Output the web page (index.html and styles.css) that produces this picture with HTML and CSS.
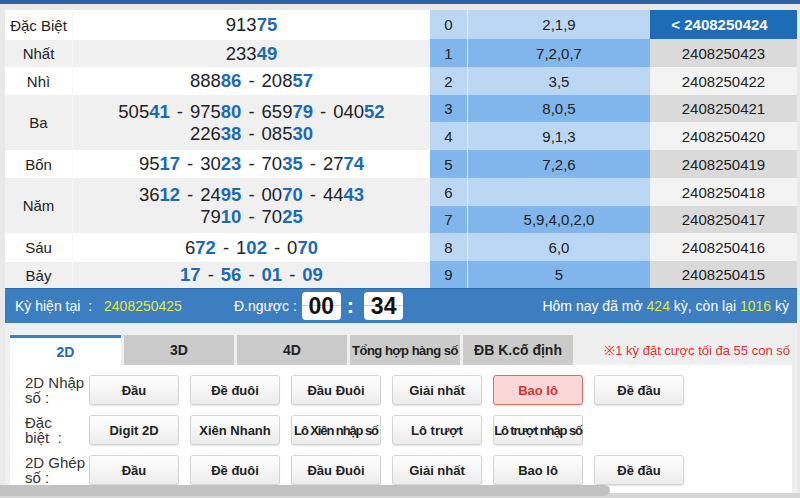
FILE: index.html
```html
<!DOCTYPE html>
<html lang="vi">
<head>
<meta charset="utf-8">
<link rel="stylesheet" href="styles.css">
</head>
<body>
<div class="top-strip"></div>
<div class="page">
  <div class="results">
    <div class="prizes">
      <div class="prow white h30"><div class="plabel">Đặc Biệt</div><div class="pnums"><span>913<b>75</b></span></div></div>
      <div class="prow gray h27"><div class="plabel">Nhất</div><div class="pnums"><span>233<b>49</b></span></div></div>
      <div class="prow white h28"><div class="plabel">Nhì</div><div class="pnums"><span>888<b>86</b><i>-</i>208<b>57</b></span></div></div>
      <div class="prow gray h55"><div class="plabel">Ba</div><div class="pnums"><span>505<b>41</b><i>-</i>975<b>80</b><i>-</i>659<b>79</b><i>-</i>040<b>52</b></span><span>226<b>38</b><i>-</i>085<b>30</b></span></div></div>
      <div class="prow white h28"><div class="plabel">Bốn</div><div class="pnums"><span>95<b>17</b><i>-</i>30<b>23</b><i>-</i>70<b>35</b><i>-</i>27<b>74</b></span></div></div>
      <div class="prow gray h55"><div class="plabel">Năm</div><div class="pnums"><span>36<b>12</b><i>-</i>24<b>95</b><i>-</i>00<b>70</b><i>-</i>44<b>43</b></span><span>79<b>10</b><i>-</i>70<b>25</b></span></div></div>
      <div class="prow white h29"><div class="plabel">Sáu</div><div class="pnums"><span>6<b>72</b><i>-</i>1<b>02</b><i>-</i>0<b>70</b></span></div></div>
      <div class="prow gray h26"><div class="plabel">Bảy</div><div class="pnums"><span><b>17</b><i>-</i><b>56</b><i>-</i><b>01</b><i>-</i><b>09</b></span></div></div>
    </div>
    <div class="stats">
      <div class="srow light h29"><div class="sidx">0</div><div class="sval">2,1,9</div><div class="sid head">&lt; 2408250424</div></div>
      <div class="srow dark h28"><div class="sidx">1</div><div class="sval">7,2,0,7</div><div class="sid">2408250423</div></div>
      <div class="srow light h28"><div class="sidx">2</div><div class="sval">3,5</div><div class="sid">2408250422</div></div>
      <div class="srow dark h27"><div class="sidx">3</div><div class="sval">8,0,5</div><div class="sid">2408250421</div></div>
      <div class="srow light h28"><div class="sidx">4</div><div class="sval">9,1,3</div><div class="sid">2408250420</div></div>
      <div class="srow dark h28"><div class="sidx">5</div><div class="sval">7,2,6</div><div class="sid">2408250419</div></div>
      <div class="srow light h28"><div class="sidx">6</div><div class="sval"></div><div class="sid">2408250418</div></div>
      <div class="srow dark h27"><div class="sidx">7</div><div class="sval">5,9,4,0,2,0</div><div class="sid">2408250417</div></div>
      <div class="srow light h28"><div class="sidx">8</div><div class="sval">6,0</div><div class="sid">2408250416</div></div>
      <div class="srow dark h27"><div class="sidx">9</div><div class="sval">5</div><div class="sid">2408250415</div></div>
    </div>
  </div>
  <div class="infobar">
    <div class="info-left">
      <span class="lbl">Kỳ hiện tại &nbsp;:</span>
      <span class="cur">2408250425</span>
      <span class="lbl countdown-lbl">Đ.ngược :</span>
      <span class="flip">00</span>
      <span class="colon">:</span>
      <span class="flip">34</span>
    </div>
    <div class="info-right">Hôm nay đã mở <em>424</em> kỳ, còn lại <em>1016</em> kỳ</div>
  </div>
  <div class="lower">
    <div class="tabs">
      <div class="tab active">2D</div>
      <div class="tab">3D</div>
      <div class="tab">4D</div>
      <div class="tab narrow">Tổng hợp hàng số</div>
      <div class="tab">ĐB K.cố định</div>
      <div class="notice">※1 kỳ đặt cược tối đa 55 con số</div>
    </div>
    <div class="panel">
      <div class="brow">
        <div class="blabel">2D Nhập<br>số :</div>
        <button class="btn">Đầu</button>
        <button class="btn">Đề đuôi</button>
        <button class="btn">Đầu Đuôi</button>
        <button class="btn">Giải nhất</button>
        <button class="btn selected">Bao lô</button>
        <button class="btn">Đề đầu</button>
      </div>
      <div class="brow">
        <div class="blabel">Đặc<br>biệt &nbsp;:</div>
        <button class="btn">Digit 2D</button>
        <button class="btn">Xiên Nhanh</button>
        <button class="btn tight">Lô Xiên nhập số</button>
        <button class="btn">Lô trượt</button>
        <button class="btn tight">Lô trượt nhập số</button>
      </div>
      <div class="brow">
        <div class="blabel">2D Ghép<br>số :</div>
        <button class="btn">Đầu</button>
        <button class="btn">Đề đuôi</button>
        <button class="btn">Đầu Đuôi</button>
        <button class="btn">Giải nhất</button>
        <button class="btn">Bao lô</button>
        <button class="btn">Đề đầu</button>
      </div>
    </div>
  </div>
</div>
<div class="hscroll"><div class="hthumb"></div></div>
</body>
</html>
```
FILE: styles.css
```css
* { box-sizing: border-box; }
html, body { margin: 0; padding: 0; }
body {
  width: 800px;
  height: 498px;
  overflow: hidden;
  background: #e9e9e9;
  font-family: "Liberation Sans", Arial, sans-serif;
  color: #222;
  position: relative;
}
.top-strip { height: 4px; background: #2c62a6; }
.page { padding: 6px 3px 0 5px; }

.results { display: flex; }
.prizes { width: 425px; }
.prow { display: flex; }
.prow.white { background: #ffffff; }
.prow.gray { background: #f0f0f0; }
.h26 { height: 26px; } .h27 { height: 27px; } .h28 { height: 28px; }
.h29 { height: 29px; } .h30 { height: 30px; } .h55 { height: 55px; }
.plabel {
  width: 68px;
  display: flex; align-items: center; justify-content: center;
  font-size: 15px; color: #222;
  border-right: 1px solid #f7f7f7;
}
.pnums {
  flex: 1;
  display: flex; flex-direction: column; align-items: center; justify-content: center;
  font-size: 18.5px; line-height: 22px; color: #222;
}
.pnums span { display: block; white-space: nowrap; }
.pnums b { color: #1c6ab3; font-weight: bold; }
.pnums i { font-style: normal; margin: 0 7px; }

.stats { width: 367px; }
.srow { display: flex; font-size: 15px; }
.sidx {
  width: 38px; display: flex; align-items: center; justify-content: center;
  border-right: 1px solid #e2eefb;
}
.sval { width: 182px; display: flex; align-items: center; justify-content: center; }
.sid { flex: 1; display: flex; align-items: center; justify-content: center; color: #222; }
.srow.light .sidx, .srow.light .sval { background: #bcd7f3; }
.srow.dark .sidx, .srow.dark .sval { background: #80b6eb; }
.srow.light .sid { background: #f3f3f3; }
.srow.dark .sid { background: #dadada; }
.sid.head { background: #1c6cb8 !important; color: #fff; font-weight: bold; padding-right: 8px; }

.infobar {
  height: 35px;
  background: #3d7ec1;
  border-top: 1px solid #2a6ab0;
  display: flex; align-items: center; justify-content: space-between;
  padding: 0 8px 0 10px;
  color: #fff; font-size: 14px;
}
.info-left { display: flex; align-items: center; }
.cur { color: #dfe650; margin-left: 12px; }
.countdown-lbl { margin-left: 52px; }
.flip {
  width: 39px; height: 28px; margin-left: 5px;
  background: #fff; border-radius: 4px;
  color: #111; font-weight: bold; font-size: 23px;
  display: flex; align-items: center; justify-content: center;
  background-image: linear-gradient(to bottom, #fff 0, #fff 13px, #d0d0d0 13px, #d0d0d0 14px, #fff 14px);
}
.colon { color: #fff; font-weight: bold; font-size: 22px; margin: 0 5px 0 6px; }
.info-right em { font-style: normal; color: #dfe650; }

.lower { background: #efefef; padding: 12px 5px 0 5px; height: 175px; }
.tabs { display: flex; align-items: flex-end; height: 30px; }
.tab {
  width: 110px; height: 30px; margin-right: 3px;
  background: #cbcbcb; color: #222; font-weight: bold; font-size: 14px;
  display: flex; align-items: center; justify-content: center;
}
.tab.active { background: #fff; color: #1e6ab4; border-top: 3px solid #3d7ec1; width: 111px; }
.tab.narrow { font-size: 13px; letter-spacing: -0.5px; }
.notice { color: #e2302c; font-size: 13px; margin-left: auto; margin-right: 2px; align-self: center; }

.panel { background: #fff; padding: 10px 0 0 15px; height: 133px; }
.brow { display: flex; align-items: center; height: 30px; margin-bottom: 10px; }
.blabel {
  width: 64px; font-size: 15px; line-height: 15px; color: #333;
}
.btn {
  width: 90px; height: 30px; margin-right: 11px; padding: 0;
  font-family: "Liberation Sans", Arial, sans-serif;
  font-size: 13px; font-weight: bold; color: #222;
  background: linear-gradient(to bottom, #ffffff, #ececec);
  border: 1px solid #d4d4d4; border-radius: 3px;
  box-shadow: 0 1px 1px rgba(0,0,0,0.12);
}
.btn.tight { letter-spacing: -1.1px; }
.btn.selected {
  background: #fbd7d7; color: #e2302c; border-color: #e06a6a;
}

.hscroll {
  position: absolute; left: 0; right: 0; bottom: 0; height: 13px;
  background: linear-gradient(to bottom, transparent 0, transparent 8px, #d6d6d6 8px);
}
.hthumb {
  position: absolute; left: 0; top: 0; width: 610px; height: 11px;
  background: #c2c2c2; border-radius: 0 6px 6px 0;
}
```
